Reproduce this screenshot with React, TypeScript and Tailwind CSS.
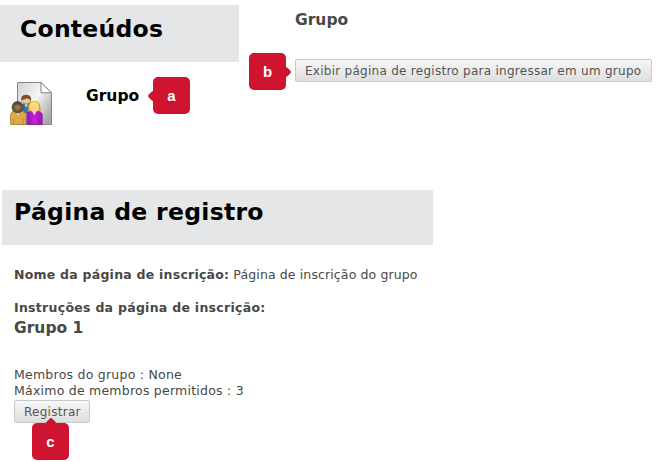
import React from "react";

function Badge({ letter, side }: { letter: string; side: "left" | "right" | "top" }) {
  const place = {
    left: "-left-[4px] top-[14.5px]",
    right: "-right-[4px] top-[14.5px]",
    top: "left-[14.5px] -top-[4px]",
  }[side];
  return (
    <div className="relative flex h-[37px] w-[37px] shrink-0 items-center justify-center rounded-[5px] bg-[#cf1430]">
      <span className={`absolute h-2 w-2 rotate-45 rounded-[2px] bg-[#cf1430] ${place}`} />
      <span className="relative font-['Liberation_Sans',sans-serif] text-[15px] leading-[37px] font-bold text-white">
        {letter}
      </span>
    </div>
  );
}

function GroupIcon() {
  return (
    <svg width="43" height="43" viewBox="0 0 43 44" preserveAspectRatio="none" className="block shrink-0">
      <defs>
        <linearGradient id="page" x1="0.1" y1="0.1" x2="1" y2="0.8">
          <stop offset="0" stopColor="#d8d8d8" />
          <stop offset="0.45" stopColor="#f6f6f6" />
          <stop offset="1" stopColor="#a5a5a5" />
        </linearGradient>
        <radialGradient id="dark">
          <stop offset="0" stopColor="#a8824f" />
          <stop offset="0.55" stopColor="#80633d" />
          <stop offset="1" stopColor="#4c4539" />
        </radialGradient>
        <linearGradient id="purple" x1="0" y1="0" x2="1" y2="0">
          <stop offset="0" stopColor="#9a1ab4" />
          <stop offset="0.5" stopColor="#c51edb" />
          <stop offset="1" stopColor="#9d18b8" />
        </linearGradient>
      </defs>
      <path d="M7.500 .5h23.500l10.500 10.500v32.500h-34z" fill="url(#page)" stroke="#848484" />
      <path d="M31 .5v10.500h10.500z" fill="#fff" stroke="#808080" strokeLinejoin="round" />
      <path d="M10.500 32c0-8 1-10 6-10s6 2 6 10z" fill="#3474c4" stroke="#2a4b78" strokeWidth=".7" />
      <path d="M14.500 22l1.700 4 1.800-4z" fill="#e9f0f8" />
      <circle cx="16.200" cy="18" r="4.600" fill="#f4c69c" stroke="#805a38" strokeWidth=".7" />
      <path d="M11.500 18.500c-.8-4 2-5.200 4.700-5.200s5.500 1.200 4.700 5.200c-1.500-.8-3.200-2-4.200-2-1.500 1-3.200 1.500-5.200 2z" fill="#775025" />
      <path d="M.5 43.500v-9c0-4 2.500-5 7.500-5s8 1 8 5v9z" fill="#deaa46" stroke="#9a762d" strokeWidth=".7" />
      <path d="M3.700 37v6.500M13.200 37v6.500" stroke="#b58631" strokeWidth=".8" />
      <path d="M5.700 29.500l2 5 2-5z" fill="#f8eedb" />
      <circle cx="7.600" cy="26" r="5.600" fill="url(#dark)" stroke="#514b40" strokeWidth=".7" />
      <path d="M2.500 24c.7-3.500 3-4.200 5.200-4.200s4.400 1 5.200 4.200c-3-1.800-7-1.800-10.400 0z" fill="#504b42" />
      <path d="M18.500 32.500c-1.200-9 .5-12.500 5.700-12.500s7 4 5.500 12.500z" fill="#dcb036" stroke="#b58a29" strokeWidth=".6" />
      <path d="M16.800 43.500v-9c0-3.700 2-4.500 7.500-4.500s8 1 8 4.500v9z" fill="url(#purple)" stroke="#801b95" strokeWidth=".7" />
      <path d="M20 37v6.500M29.200 37v6.500" stroke="#87149f" strokeWidth=".8" />
      <path d="M22 30l2.300 4 2.500-4z" fill="#ffd2ad" />
      <circle cx="24.200" cy="26.500" r="4.400" fill="#ffcf9e" />
      <path d="M19.500 26.500c-.5-4 1.500-6.300 4.700-6.300s5.300 2.300 4.800 6.300c-1.200-1-2.200-2-2.700-3.500-1 2-4 2.500-6.800 3.500z" fill="#ffe05a" />
    </svg>
  );
}

const button =
  "flex items-center rounded-[2px] border border-[#c8c8c8] bg-linear-to-b from-[#f7f7f7] to-[#dfdfdf] pl-[9px] text-[12px] tracking-[0.27px] whitespace-nowrap text-[#555]";

export default function App() {
  return (
    <div className="h-[462px] w-[669px] overflow-hidden bg-white font-['DejaVu_Sans',Verdana,sans-serif] text-[#484848]">
      <div className="flex h-[190px]">
        <section className="w-[249px] shrink-0 pt-[5px]">
          <h1 className="h-[57px] w-[239px] bg-[#e5e6e8] pl-5 text-[23.5px] leading-[48px] font-bold tracking-[0.25px] text-black">
            Conteúdos
          </h1>
          <div className="flex pt-[15px] pl-[10px]">
            <div className="pt-[5px]"><GroupIcon /></div>
            <h2 className="ml-[33px] w-[67px] text-[15.5px] leading-[38px] font-bold text-black">Grupo</h2>
            <Badge letter="a" side="left" />
          </div>
        </section>
        <section className="pt-[10px]">
          <h2 className="pl-[46px] text-[15.5px] leading-[21px] font-bold">Grupo</h2>
          <div className="mt-[22px] flex">
            <Badge letter="b" side="right" />
            <button className={`${button} mt-[6px] ml-[9px] h-[23px] w-[357px] pt-px`}>
              Exibir página de registro para ingressar em um grupo
            </button>
          </div>
        </section>
      </div>
      <section>
        <h1 className="ml-[2px] h-[55px] w-[431px] bg-[#e5e6e8] pl-3 text-[23.5px] leading-[44px] font-bold tracking-[0.3px] text-black">
          Página de registro
        </h1>
        <div className="pt-[22px] pl-[14px] text-[12.5px] leading-[16px] whitespace-nowrap">
          <p className="flex gap-1">
            <strong className="tracking-[0.24px]">Nome da página de inscrição:</strong>
            <span className="tracking-[0.12px]">Página de inscrição do grupo</span>
          </p>
          <p className="mt-[17px] font-bold tracking-[0.28px]">Instruções da página de inscrição:</p>
          <h3 className="h-[24px] text-[15.5px] leading-[24px] font-bold">Grupo 1</h3>
          <p className="mt-[27px] tracking-[0.24px]">Membros do grupo : None</p>
          <p className="tracking-[0.23px]">Máximo de membros permitidos : 3</p>
          <button className={`${button} mt-px h-[23px] w-[76px]`}>Registrar</button>
          <div className="ml-[18px]"><Badge letter="c" side="top" /></div>
        </div>
      </section>
    </div>
  );
}
